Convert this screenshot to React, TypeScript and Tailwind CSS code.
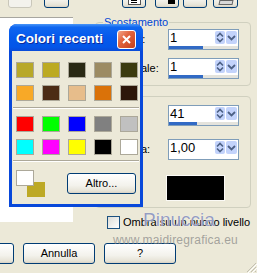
// Ombra — PSP-Dialog mit aufgeklapptem "Colori recenti"-Fenster.

const BTN =
  "border border-[#003c74] rounded-[3px] bg-[linear-gradient(180deg,#ffffff_0%,#f3f2ec_60%,#e6e3d6_90%,#d6d0c5_100%)]";

const RECENT: string[][] = [
  ["#b8a829", "#bcaa22", "#2a2914", "#9c8b63", "#3b3a10"],
  ["#f8a927", "#4c2c15", "#e7bd8b", "#da7209", "#2c160a"],
];
const BASIC: string[][] = [
  ["#ff0000", "#00ff00", "#0000ff", "#808080", "#c0c0c0"],
  ["#00ffff", "#ff00ff", "#ffff00", "#000000", "#ffffff"],
];

function SpinBtns() {
  return (
    <div className="flex gap-[1px] pt-[1px] pr-[1px]">
      <div className="flex h-[13px] w-[10px] items-center justify-center rounded-[2px] bg-[#c3d3fb]">
        <svg width="8" height="11" viewBox="0 0 8 11">
          <path d="M1 4.5 L4 1.5 L7 4.5" stroke="#4d6185" strokeWidth="1.6" fill="none" />
          <path d="M1 6.5 L4 9.5 L7 6.5" stroke="#4d6185" strokeWidth="1.6" fill="none" />
        </svg>
      </div>
      <div className="flex h-[13px] w-[11px] items-center justify-center rounded-[2px] bg-[#c3d3fb]">
        <svg width="9" height="6" viewBox="0 0 9 6">
          <path d="M1 1 L4.5 4.5 L8 1" stroke="#4d6185" strokeWidth="1.8" fill="none" />
        </svg>
      </div>
    </div>
  );
}

function SpinInput({ value, bar }: { value: string; bar?: string }) {
  return (
    <div className="flex h-[21px] w-[71px] shrink-0 flex-col border border-[#7f9db9] bg-white">
      <div className="flex flex-1 items-start">
        <span className="flex-1 pl-[1px] pt-[1px] text-[13px] leading-[14px] text-black">{value}</span>
        <SpinBtns />
      </div>
      {bar && (
        <div className="h-[3px] bg-[#e4e3dc]">
          <div className={`h-full bg-[#316ac5] ${bar}`} />
        </div>
      )}
    </div>
  );
}

function Row({ label, children, labelW = "w-[72px]" }: { label: string; children: React.ReactNode; labelW?: string }) {
  return (
    <div className="flex items-center">
      <span className={`${labelW} shrink-0 pl-[4px] text-[11px] leading-[13px] text-black`}>{label}</span>
      {children}
    </div>
  );
}

function Swatch({ color }: { color: string }) {
  return <div className="h-[16px] w-[18px] border border-[#aca899]" style={{ backgroundColor: color }} />;
}

function SwatchRows({ rows }: { rows: string[][] }) {
  return (
    <div className="flex flex-col gap-[7px] pl-[4px]">
      {rows.map((r, i) => (
        <div key={i} className="flex gap-[8px]">
          {r.map((c, j) => (
            <Swatch key={j} color={c} />
          ))}
        </div>
      ))}
    </div>
  );
}

function Sep({ className }: { className: string }) {
  return <div className={`mx-[1px] h-[2px] border-t border-[#aca899] border-b border-b-white ${className}`} />;
}

function RecentColors() {
  return (
    <div className="absolute left-[9px] top-[24px] flex h-[183px] w-[134px] flex-col overflow-hidden rounded-t-[8px] bg-[#0848da]">
      <div className="flex h-[27px] shrink-0 items-start bg-[linear-gradient(180deg,#4a96f8_0%,#0f66f0_12%,#0559ec_50%,#0356e8_85%,#0a4bd8_100%)] pl-[7px] pr-[7px]">
        <span className="mt-[7px] text-[13.5px] font-bold leading-[16px] text-white [text-shadow:1px_1px_#0b2a9a]">
          Colori recenti
        </span>
        <div className="ml-auto mt-[6px] flex h-[19px] w-[19px] items-center justify-center rounded-[3px] border border-white bg-[linear-gradient(135deg,#f2a68a_0%,#e2643e_40%,#c53f1a_100%)]">
          <svg width="9" height="9" viewBox="0 0 9 9">
            <path d="M1 1 L8 8 M8 1 L1 8" stroke="white" strokeWidth="2" />
          </svg>
        </div>
      </div>
      <div className="mx-[3px] mb-[3px] flex flex-1 flex-col bg-[#ece9d8] pt-[11px]">
        <SwatchRows rows={RECENT} />
        <Sep className="mt-[6px]" />
        <div className="mt-[7px]">
          <SwatchRows rows={BASIC} />
        </div>
        <Sep className="mt-[5px]" />
        <div className="mt-[8px] flex items-start pl-[4px]">
          <div className="relative h-[28px] w-[29px]">
            <div className="absolute left-[11px] top-[12px] h-[15px] w-[18px] bg-[#bda926]" />
            <div className="absolute left-0 top-0 h-[16px] w-[18px] border border-[#aca899] bg-white" />
          </div>
          <div className={`${BTN} ml-[22px] mt-[3px] flex h-[21px] w-[69px] items-center justify-center text-[11px] text-black`}>
            Altro...
          </div>
        </div>
      </div>
    </div>
  );
}

export default function App() {
  return (
    <div className="relative flex h-[273px] w-[257px] flex-col overflow-hidden bg-[#ece9d8] font-['Liberation_Sans',Arial,sans-serif]">
      {/* Werkzeugleiste, oben abgeschnitten */}
      <div className="flex h-[8px] shrink-0 items-end overflow-hidden">
        <div className="ml-[8px] h-[20px] w-[24px] shrink-0 rounded-[3px] border border-[#c9c7ba] bg-[#f3f2ec]" />
        <div className={`${BTN} ml-[12px] h-[20px] w-[25px] shrink-0`} />
        <div className={`${BTN} ml-[53px] flex h-[20px] w-[24px] shrink-0 items-end justify-center pb-[2px]`}>
          <div className="h-[7px] w-[13px] border border-[#555] bg-white pt-[1px] pl-[2px]">
            <div className="h-[1px] w-[6px] bg-black" />
            <div className="mt-[1px] h-[1px] w-[6px] bg-black" />
          </div>
        </div>
        <div className={`${BTN} ml-[9px] flex h-[20px] w-[24px] shrink-0 items-end justify-end pb-[3px] pr-[3px]`}>
          <div className="h-[6px] w-[7px] bg-black" />
        </div>
        <div className={`${BTN} ml-[4px] h-[20px] w-[24px] shrink-0`} />
        <div className={`${BTN} ml-[6px] flex h-[20px] w-[25px] shrink-0 items-end justify-center pb-[2px]`}>
          <div className="h-[5px] w-[14px] -skew-x-12 border border-[#666] bg-[#d8d8d8]" />
        </div>
      </div>

      {/* Hauptbereich */}
      <div className="flex h-[235px] shrink-0 items-start">
        <div className="mt-[9px] h-[205px] w-[73px] shrink-0 border-t border-[#a7a6a0] bg-white" />
        <div className="ml-[22px] flex w-[156px] flex-col">
          <fieldset className="mt-[8px] rounded-[4px] border border-[#d0d0bf] pb-[6px]">
            <legend className="ml-[7px] px-[1px] text-[11px] leading-[13px] text-[#0046d5]">Scostamento</legend>
            <div className="flex flex-col gap-[8px]">
              <Row label="Verticale:">
                <SpinInput value="1" bar="w-[34px]" />
              </Row>
              <Row label="Orizzontale:">
                <SpinInput value="1" bar="w-[34px]" />
              </Row>
            </div>
          </fieldset>

          <div className="mt-[10px] flex h-[112px] flex-col rounded-[4px] border border-[#d0d0bf] pt-[8px]">
            <Row label="Opacità:">
              <SpinInput value="41" bar="w-[28px]" />
            </Row>
            <div className="mt-[13px]">
              <Row label="Sfocatura:">
                <SpinInput value="1,00" />
              </Row>
            </div>
            <div className="mt-[15px] pl-[70px]">
              <div className="h-[26px] w-[59px] border border-[#fbfaf6] bg-black" />
            </div>
          </div>

          <div className="ml-[12px] mt-[8px] flex items-center">
            <div className="h-[13px] w-[13px] border border-[#1c5180] bg-[linear-gradient(135deg,#dcdcd7,#ffffff)]" />
            <span className="ml-[3px] text-[11px] leading-[13px] text-black">Ombra su un nuovo livello</span>
          </div>
        </div>
      </div>

      {/* Schaltflächen */}
      <div className="flex gap-[9px]">
        <div className={`${BTN} -ml-[58px] h-[21px] w-[72px] shrink-0`} />
        <div className={`${BTN} flex h-[21px] w-[72px] shrink-0 items-center justify-center text-[11px] text-black`}>
          Annulla
        </div>
        <div className={`${BTN} flex h-[21px] w-[72px] shrink-0 items-center justify-center text-[11px] text-black`}>
          ?
        </div>
      </div>

      {/* Größen-Griff */}
      <svg className="absolute bottom-0 right-0" width="12" height="12" viewBox="0 0 12 12">
        <path d="M11 2 L2 11 M11 6 L6 11 M11 10 L10 11" stroke="#c2bfb1" strokeWidth="1" />
        <path d="M12 3 L3 12 M12 7 L7 12" stroke="#ffffff" strokeWidth="1" />
      </svg>

      <RecentColors />

      {/* Wasserzeichen */}
      <span className="absolute left-[143px] top-[210px] text-[19px] leading-[19px] text-[rgba(115,125,175,0.75)] [text-shadow:0_0_1px_#ffffff]">
        Pinuccia
      </span>
      <span className="absolute left-[113px] top-[234px] text-[12px] leading-[12px] tracking-[0.2px] text-[rgba(130,130,130,0.7)]">
        www.maidiregrafica.eu
      </span>
    </div>
  );
}
